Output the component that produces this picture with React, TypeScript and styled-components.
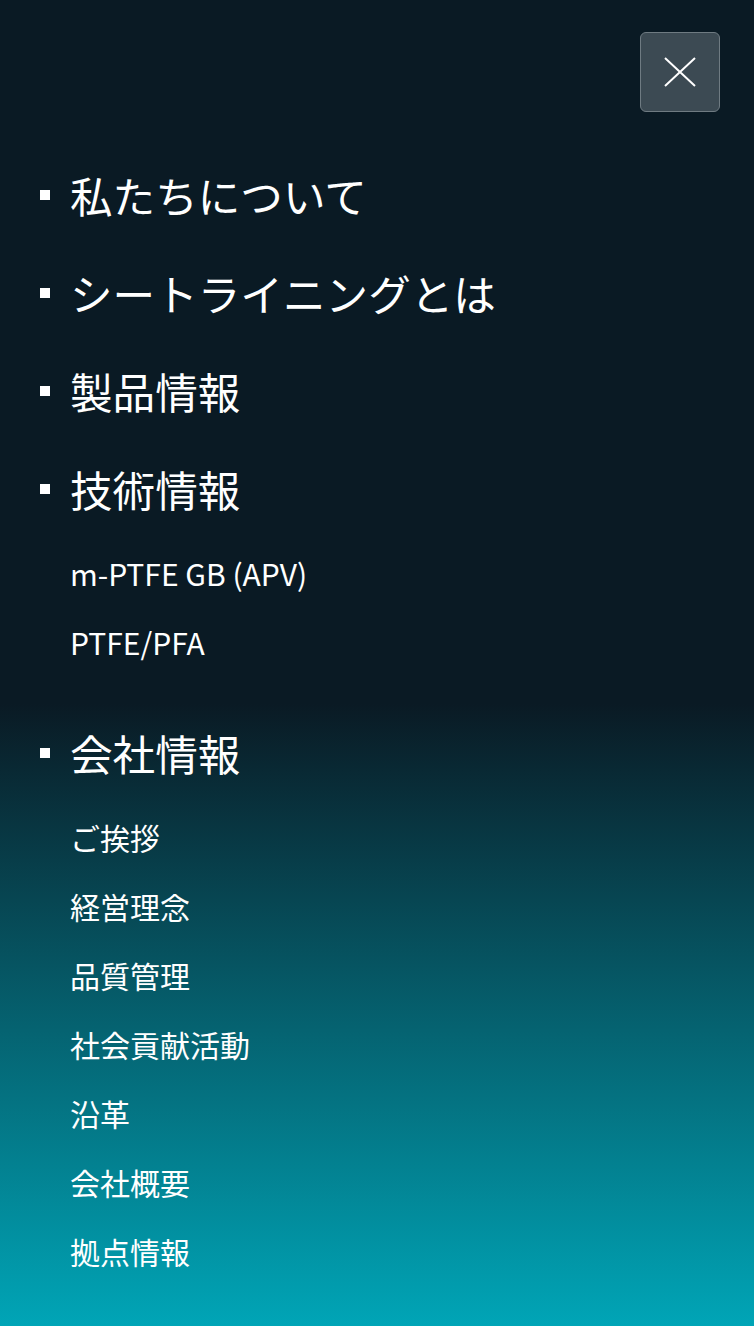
import React from "react";
import styled, { createGlobalStyle } from "styled-components";

const GlobalStyle = createGlobalStyle`
  html, body {
    margin: 0;
    padding: 0;
  }
  body {
    font-family: "Noto Sans CJK JP", "Noto Sans", sans-serif;
    color: #ffffff;
  }
`;

const Wrapper = styled.div`
  min-height: 100vh;
  box-sizing: border-box;
  padding: 32px 34px 40px 40px;
  background: linear-gradient(
    to bottom,
    #0a1a24 0%,
    #0a1a24 52%,
    #00abbd 100%
  );
`;

const TopBar = styled.div`
  display: flex;
  justify-content: flex-end;
`;

const CloseButton = styled.button`
  width: 80px;
  height: 80px;
  padding: 0;
  display: flex;
  align-items: center;
  justify-content: center;
  background-color: #3c4a53;
  border: 1.5px solid #6f7b82;
  border-radius: 6px;
  cursor: pointer;
`;

const Menu = styled.ul`
  list-style: none;
  margin: 34px 0 0;
  padding: 0;
`;

const MainItem = styled.li`
  display: flex;
  align-items: center;
  gap: 20px;
  height: 98px;
  font-size: 42.6px;
  line-height: 98px;
  font-weight: 400;

  &::before {
    content: "";
    width: 10px;
    height: 10px;
    background-color: #ffffff;
    flex-shrink: 0;
  }
`;

const SubList = styled.ul`
  list-style: none;
  margin: 1px 0 27px;
  padding: 0 0 0 30px;
`;

const SubItem = styled.li`
  font-size: 30px;
  line-height: 69px;
  height: 69px;
`;

interface ISection {
  title: string;
  children?: string[];
}

const sections: ISection[] = [
  { title: "私たちについて" },
  { title: "シートライニングとは" },
  { title: "製品情報" },
  { title: "技術情報", children: ["m-PTFE GB (APV)", "PTFE/PFA"] },
  {
    title: "会社情報",
    children: [
      "ご挨拶",
      "経営理念",
      "品質管理",
      "社会貢献活動",
      "沿革",
      "会社概要",
      "拠点情報",
    ],
  },
];

const App: React.FunctionComponent = () => {
  return (
    <Wrapper>
      <GlobalStyle />
      <TopBar>
        <CloseButton aria-label="close">
          <svg width="34" height="30" viewBox="0 0 34 30">
            <path
              d="M2 1 L32 29 M32 1 L2 29"
              stroke="#ffffff"
              strokeWidth="2"
              fill="none"
            />
          </svg>
        </CloseButton>
      </TopBar>
      <Menu>
        {sections.map((section) => (
          <React.Fragment key={section.title}>
            <MainItem>{section.title}</MainItem>
            {section.children && (
              <SubList>
                {section.children.map((child) => (
                  <SubItem key={child}>{child}</SubItem>
                ))}
              </SubList>
            )}
          </React.Fragment>
        ))}
      </Menu>
    </Wrapper>
  );
};

export default App;
